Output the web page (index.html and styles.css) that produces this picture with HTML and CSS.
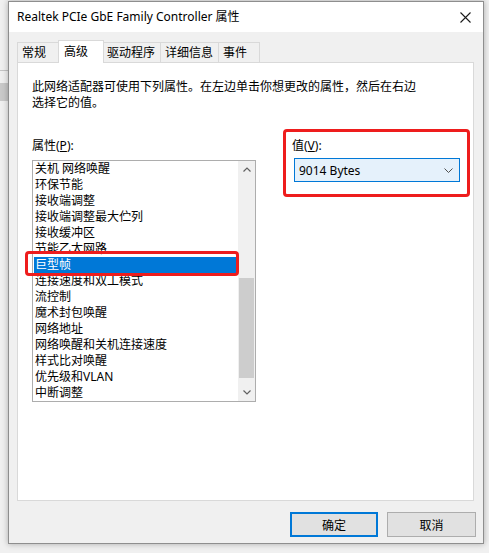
FILE: index.html
```html
<!DOCTYPE html>
<html>
<head>
    <meta charset="utf-8">
    <title>Realtek PCIe GbE Family Controller 属性</title>
    <link rel="stylesheet" href="styles.css">
</head>
<body>
<div class="dialog">
    <div class="titlebar">
        <span class="title">Realtek PCIe GbE Family Controller 属性</span>
        <svg class="close" width="11" height="11" viewBox="0 0 11 11">
            <path d="M0.5 0.5 L10.5 10.5 M10.5 0.5 L0.5 10.5" stroke="#1a1a1a" stroke-width="1.1" fill="none"/>
        </svg>
    </div>
    <div class="client">
        <div class="tabs">
            <div class="tab">常规</div>
            <div class="tab active">高级</div>
            <div class="tab">驱动程序</div>
            <div class="tab">详细信息</div>
            <div class="tab">事件</div>
        </div>
        <div class="panel">
            <p class="desc">此网络适配器可使用下列属性。在左边单击你想更改的属性，然后在右边<br>选择它的值。</p>
            <div class="cols">
                <div class="col-prop">
                    <label class="lbl lbl-prop">属性(<u>P</u>):</label>
                    <div class="listbox">
                        <ul class="items">
                            <li>关机 网络唤醒</li>
                            <li>环保节能</li>
                            <li>接收端调整</li>
                            <li>接收端调整最大伫列</li>
                            <li>接收缓冲区</li>
                            <li>节能乙太网路</li>
                            <li class="sel">巨型帧</li>
                            <li>连接速度和双工模式</li>
                            <li>流控制</li>
                            <li>魔术封包唤醒</li>
                            <li>网络地址</li>
                            <li>网络唤醒和关机连接速度</li>
                            <li>样式比对唤醒</li>
                            <li>优先级和VLAN</li>
                            <li>中断调整</li>
                        </ul>
                        <div class="scrollbar">
                            <div class="sb-btn">
                                <svg width="8" height="5" viewBox="0 0 8 5"><path d="M0.5 4.5 L4 1 L7.5 4.5" stroke="#606060" stroke-width="1.2" fill="none"/></svg>
                            </div>
                            <div class="sb-track"><div class="sb-thumb"></div></div>
                            <div class="sb-btn">
                                <svg width="8" height="5" viewBox="0 0 8 5"><path d="M0.5 0.5 L4 4 L7.5 0.5" stroke="#606060" stroke-width="1.2" fill="none"/></svg>
                            </div>
                        </div>
                    </div>
                </div>
                <div class="col-value">
                    <label class="lbl lbl-value">值(<u>V</u>):</label>
                    <div class="combo">
                        <span>9014 Bytes</span>
                        <svg width="9" height="5" viewBox="0 0 9 5"><path d="M0.5 0.5 L4.5 4.5 L8.5 0.5" stroke="#505050" stroke-width="1" fill="none"/></svg>
                    </div>
                </div>
            </div>
            <div class="mark mark-item"></div>
            <div class="mark mark-value"></div>
        </div>
        <div class="buttons">
            <button class="btn default">确定</button>
            <button class="btn">取消</button>
        </div>
    </div>
</div>
</body>
</html>
```

FILE: styles.css
```css
* {
    box-sizing: border-box;
}
body {
    margin: 0;
    width: 489px;
    height: 553px;
    overflow: hidden;
    background: #f0f0f0;
    background-image: linear-gradient(to bottom, transparent 70px, #c4c4c4 70px, #c4c4c4 71px, transparent 71px, transparent 83px, #c9c9c9 83px, #c9c9c9 101px, transparent 101px);
    background-size: 8px 553px;
    background-repeat: no-repeat;
    font-family: "Noto Sans", "Noto Sans CJK SC", sans-serif;
    font-size: 12px;
    color: #000;
}
.dialog {
    margin: 1px 0 0 8px;
    width: 476px;
    height: 543px;
    border: 1px solid #8e8e8e;
    background: #f0f0f0;
    box-shadow: 0 0 6px rgba(0, 0, 0, 0.3);
    display: flex;
    flex-direction: column;
}
.titlebar {
    height: 30px;
    background: #fff;
    display: flex;
    align-items: center;
    justify-content: space-between;
    padding: 0 12px 0 8px;
}
.title {
    font-size: 12px;
    line-height: 16px;
}
.client {
    padding: 8px 9px 0 8px;
}
.tabs {
    display: flex;
    align-items: flex-end;
    height: 22px;
}
.tab {
    height: 20px;
    min-width: 42px;
    padding: 0 5px 0 4px;
    line-height: 19px;
    border: 1px solid #d9d9d9;
    border-bottom: none;
    background: #f0f0f0;
    margin-left: -1px;
    white-space: nowrap;
}
.tab:first-child {
    margin-left: 0;
}
.tab.active {
    height: 23px;
    min-width: 46px;
    padding-left: 5px;
    line-height: 21px;
    margin: 0 -1px -1px -1px;
    background: #fff;
    position: relative;
    z-index: 1;
}
.panel {
    position: relative;
    height: 439px;
    border: 1px solid #d9d9d9;
    background: #fff;
    padding: 16px 0 0 14px;
}
.desc {
    margin: 0;
    line-height: 16px;
}
.cols {
    display: flex;
    gap: 36px;
    margin-top: 27px;
}
.col-prop {
    width: 224px;
}
.lbl {
    display: block;
    line-height: 16px;
}
.lbl-prop {
    margin-bottom: 6px;
}
.lbl-value {
    margin-bottom: 4px;
}
.listbox {
    display: flex;
    height: 242px;
    border: 1px solid #adadad;
    background: #fff;
}
.items {
    flex: 1;
    list-style: none;
    margin: 0;
    padding: 0 2px 0 1px;
    overflow: hidden;
}
.items li {
    height: 16px;
    line-height: 16px;
    padding-left: 1px;
    white-space: nowrap;
}
.items li.sel {
    background: #0078d7;
    color: #fff;
}
.scrollbar {
    width: 17px;
    background: #f0f0f0;
    display: flex;
    flex-direction: column;
}
.sb-btn {
    height: 17px;
    display: flex;
    align-items: center;
    justify-content: center;
}
.sb-track {
    flex: 1;
    padding: 100px 1px 0 1px;
}
.sb-thumb {
    height: 100px;
    background: #cdcdcd;
}
.combo {
    width: 166px;
    height: 24px;
    margin-left: 2px;
    border: 1px solid #0078d7;
    background: #e5f1fb;
    display: flex;
    align-items: center;
    justify-content: space-between;
    padding: 0 6px 0 4px;
}
.buttons {
    display: flex;
    justify-content: flex-end;
    gap: 9px;
    margin: 11px -2px 0 0;
}
.btn {
    width: 88px;
    height: 25px;
    border: 1px solid #adadad;
    background: #e1e1e1;
    font-family: "Noto Sans CJK SC", sans-serif;
    font-size: 12px;
    color: #000;
    padding: 0;
}
.btn.default {
    border: 2px solid #0078d7;
}
.btn:last-child {
    width: 89px;
}
.mark {
    position: absolute;
    border: 3px solid #ee1d1d;
    border-radius: 4px;
}
.mark-item {
    left: 7px;
    top: 188px;
    width: 214px;
    height: 25px;
}
.mark-value {
    left: 265px;
    top: 66px;
    width: 187px;
    height: 68px;
}
```
